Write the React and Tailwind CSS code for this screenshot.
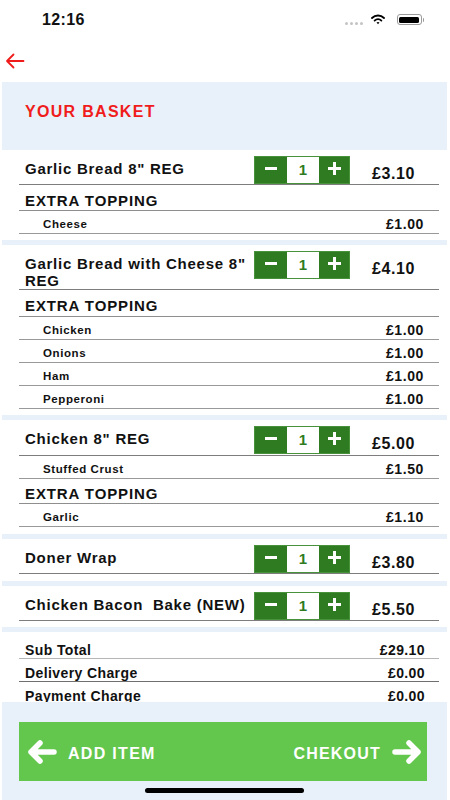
import React from "react";

const sections = [
  {
    name: 'Garlic Bread 8" REG',
    price: "£3.10",
    h: "h-[35px]",
    gap: "h-[6px]",
    rows: [
      { head: true, label: "EXTRA TOPPING", h: "h-[26px]" },
      { label: "Cheese", price: "£1.00", h: "h-[23px]" },
    ],
  },
  {
    name: 'Garlic Bread with Cheese 8" REG',
    price: "£4.10",
    h: "h-[45px]",
    gap: "h-[6px]",
    rows: [
      { head: true, label: "EXTRA TOPPING", h: "h-[27px]" },
      { label: "Chicken", price: "£1.00", h: "h-[23px]" },
      { label: "Onions", price: "£1.00", h: "h-[23px]" },
      { label: "Ham", price: "£1.00", h: "h-[23px]" },
      { label: "Pepperoni", price: "£1.00", h: "h-[23px]" },
    ],
  },
  {
    name: 'Chicken 8" REG',
    price: "£5.00",
    h: "h-[36px]",
    gap: "h-[7px]",
    rows: [
      { label: "Stuffed Crust", price: "£1.50", h: "h-[23px]" },
      { head: true, label: "EXTRA TOPPING", h: "h-[25px]" },
      { label: "Garlic", price: "£1.10", h: "h-[23px]" },
    ],
  },
  { name: "Doner Wrap", price: "£3.80", h: "h-[35px]", gap: "h-[7px]", rows: [] },
  { name: "Chicken Bacon\u00a0 Bake (NEW)", price: "£5.50", h: "h-[35px]", gap: "h-[6px]", rows: [] },
];

const totals = [
  { label: "Sub Total", price: "£29.10", h: "h-[27px]", line: "border-[#b5b5b5]" },
  { label: "Delivery Charge", price: "£0.00", h: "h-[23px]", line: "border-[#6f6f6f]" },
  { label: "Payment Charge", price: "£0.00", h: "h-[23px]", line: "border-[#9a9a9a]" },
];

function Stepper() {
  return (
    <div className="flex h-[28px] w-[96px] shrink-0 border border-[#47923a] bg-[#2e7b22]">
      <div className="flex w-[32px] items-center justify-center pb-[4px]">
        <div className="h-[3px] w-[12px] bg-white" />
      </div>
      <div className="flex w-[32px] items-center justify-center bg-white text-[15px] font-bold text-[#2e7b22]">
        1
      </div>
      <div className="flex flex-1 items-center justify-center pb-[4px]">
        <svg width="13" height="13" viewBox="0 0 13 13">
          <rect x="5" y="0" width="3" height="13" fill="white" />
          <rect x="0" y="5" width="13" height="3" fill="white" />
        </svg>
      </div>
    </div>
  );
}

function Arrow({ flip }) {
  return (
    <svg
      width="30"
      height="26"
      viewBox="0 0 30 26"
      className={flip ? "-scale-x-100" : ""}
    >
      <path
        d="M4 13 H27 M4 13 L13 4 M4 13 L13 22"
        fill="none"
        stroke="white"
        strokeWidth="5.5"
        strokeLinecap="round"
        strokeLinejoin="round"
      />
    </svg>
  );
}

export default function App() {
  return (
    <div className="flex h-[800px] w-[450px] flex-col overflow-hidden bg-white font-['Liberation_Sans',Arial,sans-serif] text-[#111]">
      {/* status bar */}
      <div className="flex h-[44px] shrink-0 items-start">
        <div className="pl-[42px] pt-[10px] text-[16px] font-bold leading-[20px] tracking-[0.4px]">12:16</div>
        <div className="ml-auto mr-[26px] mt-[14px] flex items-center">
          <div className="mt-[8px] flex gap-[2px]">
            <div className="h-[3px] w-[3px] rounded-full bg-[#c4c4c4]" />
            <div className="h-[3px] w-[3px] rounded-full bg-[#c4c4c4]" />
            <div className="h-[3px] w-[3px] rounded-full bg-[#c4c4c4]" />
            <div className="h-[3px] w-[3px] rounded-full bg-[#c4c4c4]" />
          </div>
          <svg width="14" height="11" viewBox="0 0 14 11" className="ml-[8px]">
            <path d="M1 4 A8.5 8.5 0 0 1 13 4" fill="none" stroke="black" strokeWidth="1.8" strokeLinecap="round" />
            <path d="M3.6 6.6 A5 5 0 0 1 10.4 6.6" fill="none" stroke="black" strokeWidth="1.8" strokeLinecap="round" />
            <path d="M5.5 8.6 L7 10.2 L8.5 8.6 A2.2 2.2 0 0 0 5.5 8.6 Z" fill="black" />
          </svg>
          <div className="ml-[12px] flex items-center">
            <div className="flex h-[11px] w-[25px] items-center rounded-[3px] border border-[#9a9a9a] p-[1.5px]">
              <div className="h-full w-full rounded-[1.5px] bg-black" />
            </div>
            <div className="ml-[1px] h-[4px] w-[1.5px] rounded-r bg-[#9a9a9a]" />
          </div>
        </div>
      </div>

      {/* nav */}
      <div className="flex h-[38px] shrink-0 items-start pl-[5px] pt-[8px]">
        <svg width="20" height="18" viewBox="0 0 20 18">
          <path d="M18.5 9 H2 M8.5 2.5 L2 9 L8.5 15.5" fill="none" stroke="#f01c1c" strokeWidth="1.8" strokeLinecap="round" strokeLinejoin="round" />
        </svg>
      </div>

      {/* header */}
      <div className="ml-[2px] flex h-[68px] w-[445px] shrink-0 items-start bg-[#e8f0fa] pl-[23px] pt-[20px]">
        <div className="text-[16px] font-bold leading-[20px] tracking-[1.3px] text-[#f01c1c]">YOUR BASKET</div>
      </div>

      {/* list */}
      <div className="ml-[2px] min-h-0 w-[445px] flex-1 overflow-hidden">
        {sections.map((s, i) => (
          <div key={i}>
            <div className={`ml-[17px] flex w-[420px] border-b border-[#7d7d7d] ${s.h}`}>
              <div className="w-[235px] shrink-0 pl-[6px] pt-[11px] text-[15px] font-bold leading-[16.5px] tracking-[0.75px]">
                {s.name}
              </div>
              <div className="pt-[6px]">
                <Stepper />
              </div>
              <div className="ml-[22px] pt-[14px] text-[16px] font-bold leading-[20px] tracking-[0.6px]">{s.price}</div>
            </div>
            {s.rows.map((r, j) =>
              r.head ? (
                <div
                  key={j}
                  className={`ml-[17px] flex w-[420px] items-center border-b border-[#8e8e8e] pl-[6px] pt-[7px] text-[15px] font-bold tracking-[0.9px] ${r.h}`}
                >
                  {r.label}
                </div>
              ) : (
                <div
                  key={j}
                  className={`ml-[17px] flex w-[420px] items-center justify-between border-b border-[#999] pl-[24px] pr-[15px] pt-[5px] ${r.h}`}
                >
                  <span className="text-[11.5px] font-bold tracking-[0.6px]">{r.label}</span>
                  <span className="text-[14px] font-bold tracking-[0.6px]">{r.price}</span>
                </div>
              )
            )}
            <div className={s.gap} />
            <div className="h-[5px] bg-[#e8f0fa]" />
          </div>
        ))}
        {totals.map((t, i) => (
          <div
            key={i}
            className={`ml-[17px] flex w-[420px] items-end justify-between border-b pl-[6px] pr-[14px] text-[14px] font-bold leading-[16px] tracking-[0.4px] ${t.h} ${t.line}`}
          >
            <span>{t.label}</span>
            <span>{t.price}</span>
          </div>
        ))}
      </div>

      {/* footer */}
      <div className="ml-[2px] flex h-[98px] w-[445px] shrink-0 flex-col bg-[#e8f0fa] pt-[20px]">
        <div className="ml-[17px] flex h-[59px] w-[408px] items-center bg-[#63c74d] pl-[8px] pr-[5px] text-white">
          <Arrow />
          <span className="ml-[11px] pt-[5px] text-[16px] font-bold tracking-[1.3px]">ADD ITEM</span>
          <span className="ml-auto pt-[5px] text-[16px] font-bold tracking-[1.2px]">CHEKOUT</span>
          <span className="ml-[11px]">
            <Arrow flip />
          </span>
        </div>
        <div className="ml-[143px] mt-[7px] h-[5px] w-[159px] rounded-full bg-black" />
      </div>
    </div>
  );
}
